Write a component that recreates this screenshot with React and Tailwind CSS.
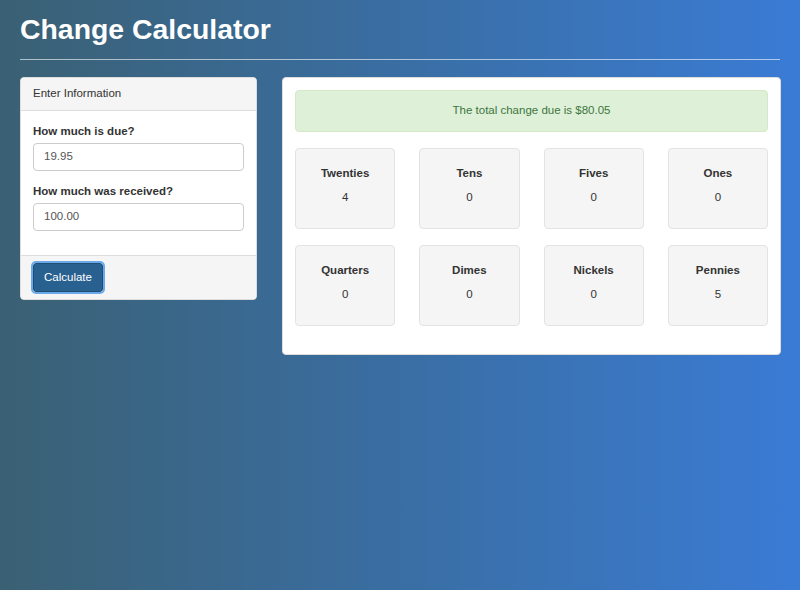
import React from "react";

const coins = [
  ["Twenties", 4], ["Tens", 0], ["Fives", 0], ["Ones", 0],
  ["Quarters", 0], ["Dimes", 0], ["Nickels", 0], ["Pennies", 5],
];

export default function App() {
  return (
    <div className="w-[800px] h-[590px] bg-gradient-to-r from-[#3a6073] to-[#3a7bd5] pl-5 pr-[19px] text-[#333]" style={{ fontFamily: '"Liberation Sans", Arial, sans-serif' }}>
      <h1 className="pt-[12px] text-[28.4px] leading-[34px] font-bold text-white">Change Calculator</h1>
      <div className="mt-[13px] mr-px h-px bg-white/60"></div>
      <div className="mt-[17px] flex gap-[25px] items-start">
        <div className="w-[237px] shrink-0 bg-white rounded-[4px] border border-[#ddd] overflow-hidden">
          <div className="h-[33px] px-3 flex items-center bg-[#f5f5f5] border-b border-[#ddd] text-[11.5px]">Enter Information</div>
          <div className="px-3 pt-[13px] pb-[24px]">
            <div className="text-[11.5px] font-bold leading-[14px]">How much is due?</div>
            <div className="mt-[5px] h-[28px] border border-[#ccc] rounded-[4px] px-[10px] flex items-center text-[11.5px] text-[#555]">19.95</div>
            <div className="mt-[13px] text-[11.5px] font-bold leading-[14px]">How much was received?</div>
            <div className="mt-[5px] h-[28px] border border-[#ccc] rounded-[4px] px-[10px] flex items-center text-[11.5px] text-[#555]">100.00</div>
          </div>
          <div className="bg-[#f5f5f5] border-t border-[#ddd] px-3 py-[7px]">
            <button className="h-[29px] px-[10px] bg-[#286090] text-white text-[11.5px] rounded-[3px] border border-[#204d74] outline outline-2 outline-[#6aa9e9]">Calculate</button>
          </div>
        </div>
        <div className="w-[499px] shrink-0 bg-white rounded-[4px] border border-[#ddd] px-3 pt-3 pb-[28px]">
          <div className="h-[42px] bg-[#dff0d8] border border-[#d6e9c6] rounded-[4px] flex items-center justify-center text-[11.5px] text-[#3c763d]">The total change due is $80.05</div>
          <div className="mt-[16px] grid grid-cols-4 gap-x-[24px] gap-y-[16px]">
            {coins.map(([n, v]) => (
              <div key={n} className="h-[81px] bg-[#f5f5f5] border border-[#e3e3e3] rounded-[4px] flex flex-col items-center pt-[17px] text-[11.5px]">
                <div className="font-bold leading-[14px]">{n}</div>
                <div className="mt-[10px] leading-[14px]">{v}</div>
              </div>
            ))}
          </div>
        </div>
      </div>
    </div>
  );
}
